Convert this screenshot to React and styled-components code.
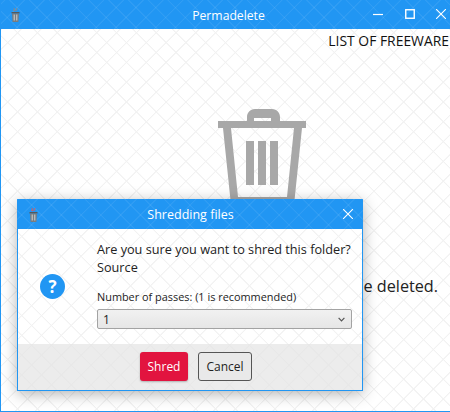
import React from "react";
import styled, { createGlobalStyle, css } from "styled-components";

const BLUE = "#2196f3";

const lattice = (color) => css`
  background-image: repeating-linear-gradient(45deg, transparent 0 12.4px, ${color} 13px 13.6px, transparent 14px),
    repeating-linear-gradient(-45deg, transparent 0 12.4px, ${color} 13px 13.6px, transparent 14px);
`;

function AppIcon({ small }) {
  return (
    <IconSvg width="9" height="16" viewBox="0 0 9 16" $small={small}>
      <path d="M3 1l1 3M6 1L5 4M2 3l2 1" stroke={small ? "#c7616b" : "#7f8b96"} strokeWidth="1" fill="none" />
      <rect x="0.5" y="5" width="8" height="1.5" fill="#55595c" />
      <path d="M1 6.5h7l-.6 8.5H1.6z" fill="#777c80" />
      <path d="M2.7 7.5h1v6h-1zM5.3 7.5h1v6h-1z" fill="#d0d3d5" />
    </IconSvg>
  );
}

function CloseIcon() {
  return (
    <svg width="10" height="10" viewBox="0 0 10 10">
      <path d="M0 0l10 10M10 0L0 10" stroke="#fff" strokeWidth="1.1" fill="none" />
    </svg>
  );
}

function BigTrash() {
  return (
    <svg width="88" height="96" viewBox="0 0 88 96">
      <path
        fill="#a8a8a8"
        fillRule="evenodd"
        d="M29 12V8c0-4 3-8 8-8h17c5 0 8 4 8 8v4h26v7h-4l-8 77H13L5 19H0v-7zM36 12h17V9H36zM13 19l7 69h49l7-69z"
      />
      <path fill="#a8a8a8" d="M28 32h8v44h-8zM40 32h8v44h-8zM52 32h8v44h-8z" />
    </svg>
  );
}

export default function App() {
  return (
    <Page>
      <GlobalStyle />
      <TitleBar>
        <AppIcon />
        <WindowTitle>Permadelete</WindowTitle>
        <Controls>
          <svg width="10" height="10" viewBox="0 0 10 10">
            <path d="M0 5.5h10" stroke="#fff" strokeWidth="1.2" />
          </svg>
          <svg width="10" height="10" viewBox="0 0 10 10">
            <rect x="0.75" y="0.75" width="8.5" height="8.5" fill="none" stroke="#fff" strokeWidth="1.4" />
          </svg>
          <CloseIcon />
        </Controls>
      </TitleBar>
      <Content>
        <Watermark>LIST OF FREEWARE</Watermark>
        <TrashSlot>
          <BigTrash />
        </TrashSlot>
        <DropHint>Drag and drop files or folders here to be deleted.</DropHint>
      </Content>

      <Dialog>
        <DialogBar>
          <AppIcon small />
          <DialogTitle>Shredding files</DialogTitle>
          <CloseIcon />
        </DialogBar>
        <DialogBody>
          <Question>?</Question>
          <Form>
            <Message>Are you sure you want to shred this folder?</Message>
            <Message>Source</Message>
            <Label>Number of passes: (1 is recommended)</Label>
            <SelectBox>
              <span>1</span>
              <svg width="7" height="5" viewBox="0 0 7 5">
                <path d="M.6 .8l2.9 3 2.9-3" fill="none" stroke="#555" strokeWidth="1.2" />
              </svg>
            </SelectBox>
          </Form>
        </DialogBody>
        <Footer>
          <ShredButton>Shred</ShredButton>
          <CancelButton>Cancel</CancelButton>
        </Footer>
      </Dialog>
    </Page>
  );
}

const GlobalStyle = createGlobalStyle`
  html, body {
    margin: 0;
    padding: 0;
    background: #fff;
  }
  body {
    font-family: "Open Sans", "Noto Sans", sans-serif;
  }
`;

const Page = styled.div`
  position: relative;
  width: 450px;
  height: 412px;
  box-sizing: border-box;
  display: flex;
  flex-direction: column;
  overflow: hidden;
  border-left: 1px solid ${BLUE};
  border-bottom: 1px solid ${BLUE};
  background-color: #fff;
  ${lattice("#f2f2f2")}
`;

const IconSvg = styled.svg`
  flex: none;
  margin-top: ${(p) => (p.$small ? "1px" : "2px")};
`;

const TitleBar = styled.div`
  flex: none;
  height: 29px;
  margin-left: -1px;
  padding: 0 4px 1px 11px;
  box-sizing: border-box;
  display: flex;
  align-items: center;
  background-color: ${BLUE};
  ${lattice("rgba(255, 255, 255, 0.07)")}
`;

const WindowTitle = styled.div`
  flex: 1;
  padding-left: 64px;
  margin-top: 2px;
  text-align: center;
  color: #fff;
  font-size: 12.2px;
`;

const Controls = styled.div`
  display: flex;
  align-items: center;
  gap: 21.5px;
`;

const Content = styled.div`
  flex: 1;
  display: flex;
  flex-direction: column;
`;

const Watermark = styled.div`
  align-self: flex-end;
  margin-right: 1px;
  height: 19px;
  padding-top: 3px;
  color: #111;
  font-size: 13.9px;
  line-height: 17px;
`;

const TrashSlot = styled.div`
  height: 96px;
  margin-top: 58px;
  padding-left: 217px;
`;

const DropHint = styled.div`
  margin-top: 70px;
  margin-right: 12px;
  align-self: flex-end;
  white-space: nowrap;
  color: #222;
  font-size: 16.2px;
  line-height: 22px;
`;

const Dialog = styled.div`
  position: absolute;
  left: 16px;
  top: 199px;
  width: 346px;
  height: 192px;
  box-sizing: border-box;
  display: flex;
  flex-direction: column;
  border: 1px solid ${BLUE};
  background-color: #fff;
  ${lattice("#f2f2f2")}
  box-shadow: 0 3px 14px rgba(0, 0, 0, 0.3);
`;

const DialogBar = styled.div`
  flex: none;
  height: 30px;
  margin: -1px -1px 0;
  padding: 0 10px 0 12px;
  display: flex;
  align-items: center;
  background-color: ${BLUE};
  ${lattice("rgba(255, 255, 255, 0.07)")}
`;

const DialogTitle = styled.div`
  flex: 1;
  text-align: center;
  color: #fff;
  font-size: 12.5px;
`;

const DialogBody = styled.div`
  flex: 1;
  display: flex;
  align-items: flex-start;
`;

const Question = styled.div`
  flex: none;
  width: 25px;
  height: 25px;
  margin: 45px 32px 0 22px;
  border-radius: 50%;
  display: flex;
  align-items: center;
  justify-content: center;
  background: ${BLUE};
  color: #fff;
  font-size: 17px;
  font-weight: 700;
`;

const Form = styled.div`
  width: 255px;
  padding-top: 11px;
  display: flex;
  flex-direction: column;
`;

const Message = styled.div`
  color: #222;
  font-size: 12.7px;
  line-height: 18px;
  white-space: nowrap;
`;

const Label = styled.div`
  margin-top: 13px;
  color: #222;
  font-size: 10.9px;
  line-height: 15px;
  white-space: nowrap;
`;

const SelectBox = styled.div`
  height: 20px;
  margin-top: 5px;
  padding: 0 6px 0 5px;
  box-sizing: border-box;
  display: flex;
  align-items: center;
  justify-content: space-between;
  border: 1px solid #a3a3a3;
  border-radius: 2px;
  background: linear-gradient(#f1f1f1, #e6e6e6);
  color: #222;
  font-size: 12px;
`;

const Footer = styled.div`
  flex: none;
  height: 46px;
  padding-top: 8px;
  box-sizing: border-box;
  display: flex;
  align-items: flex-start;
  gap: 10px;
  padding-left: 122px;
  background-color: #ececec;
  ${lattice("#e8e8e8")}
`;

const ShredButton = styled.button`
  width: 48px;
  height: 29px;
  padding: 0;
  border: none;
  border-radius: 3px;
  background: #e2143f;
  box-shadow: 0 1px 2px rgba(0, 0, 0, 0.25);
  color: #fff;
  font-family: inherit;
  font-size: 12px;
`;

const CancelButton = styled.button`
  width: 54px;
  height: 29px;
  padding: 0;
  box-sizing: border-box;
  border: 1px solid #555;
  border-radius: 3px;
  background: #e9e9e9;
  color: #222;
  font-family: inherit;
  font-size: 12px;
`;
